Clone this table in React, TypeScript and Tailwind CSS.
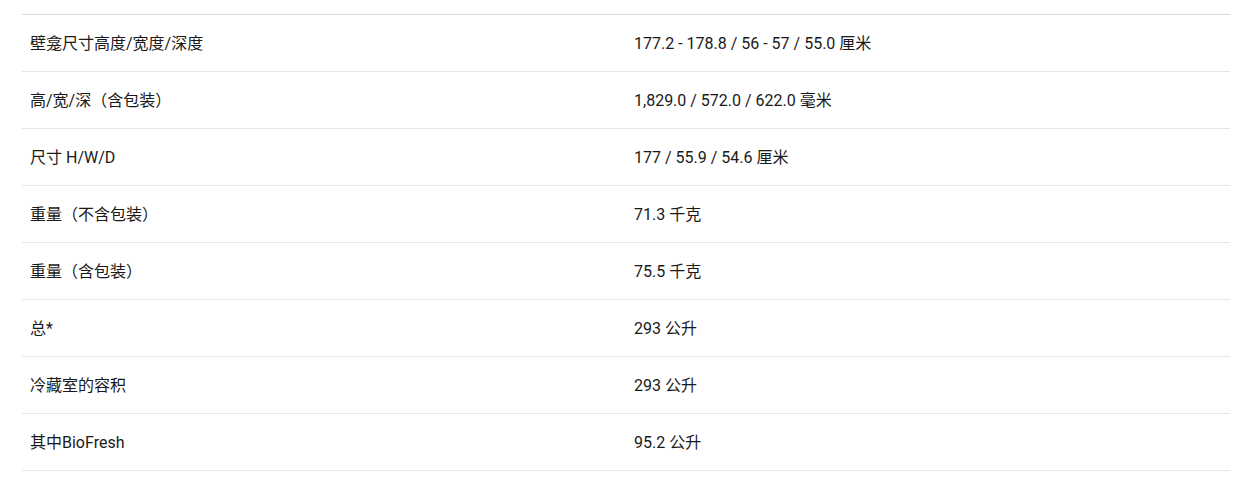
import React from "react";

const rows: [string, string][] = [
  ["壁龛尺寸高度/宽度/深度", "177.2 - 178.8 / 56 - 57 / 55.0 厘米"],
  ["高/宽/深（含包装）", "1,829.0 / 572.0 / 622.0 毫米"],
  ["尺寸 H/W/D", "177 / 55.9 / 54.6 厘米"],
  ["重量（不含包装）", "71.3 千克"],
  ["重量（含包装）", "75.5 千克"],
  ["总*", "293 公升"],
  ["冷藏室的容积", "293 公升"],
  ["其中BioFresh", "95.2 公升"],
];

export default function App() {
  return (
    <div
      className="w-[1254px] h-[494px] bg-white px-[22px] pt-[14px] text-[#1a1a1a]"
      style={{ fontFamily: "Roboto, 'Noto Sans CJK SC', sans-serif" }}
    >
      <div className="w-[1208px] border-t border-[#d7dce0]">
        {rows.map(([k, v], i) => (
          <div key={i} className="grid grid-cols-2 h-[57px] pt-[2px] border-b border-[#e6e6e6] items-center text-[16px]">
            <div className="px-2">{k}</div>
            <div className="px-2">{v}</div>
          </div>
        ))}
      </div>
    </div>
  );
}
